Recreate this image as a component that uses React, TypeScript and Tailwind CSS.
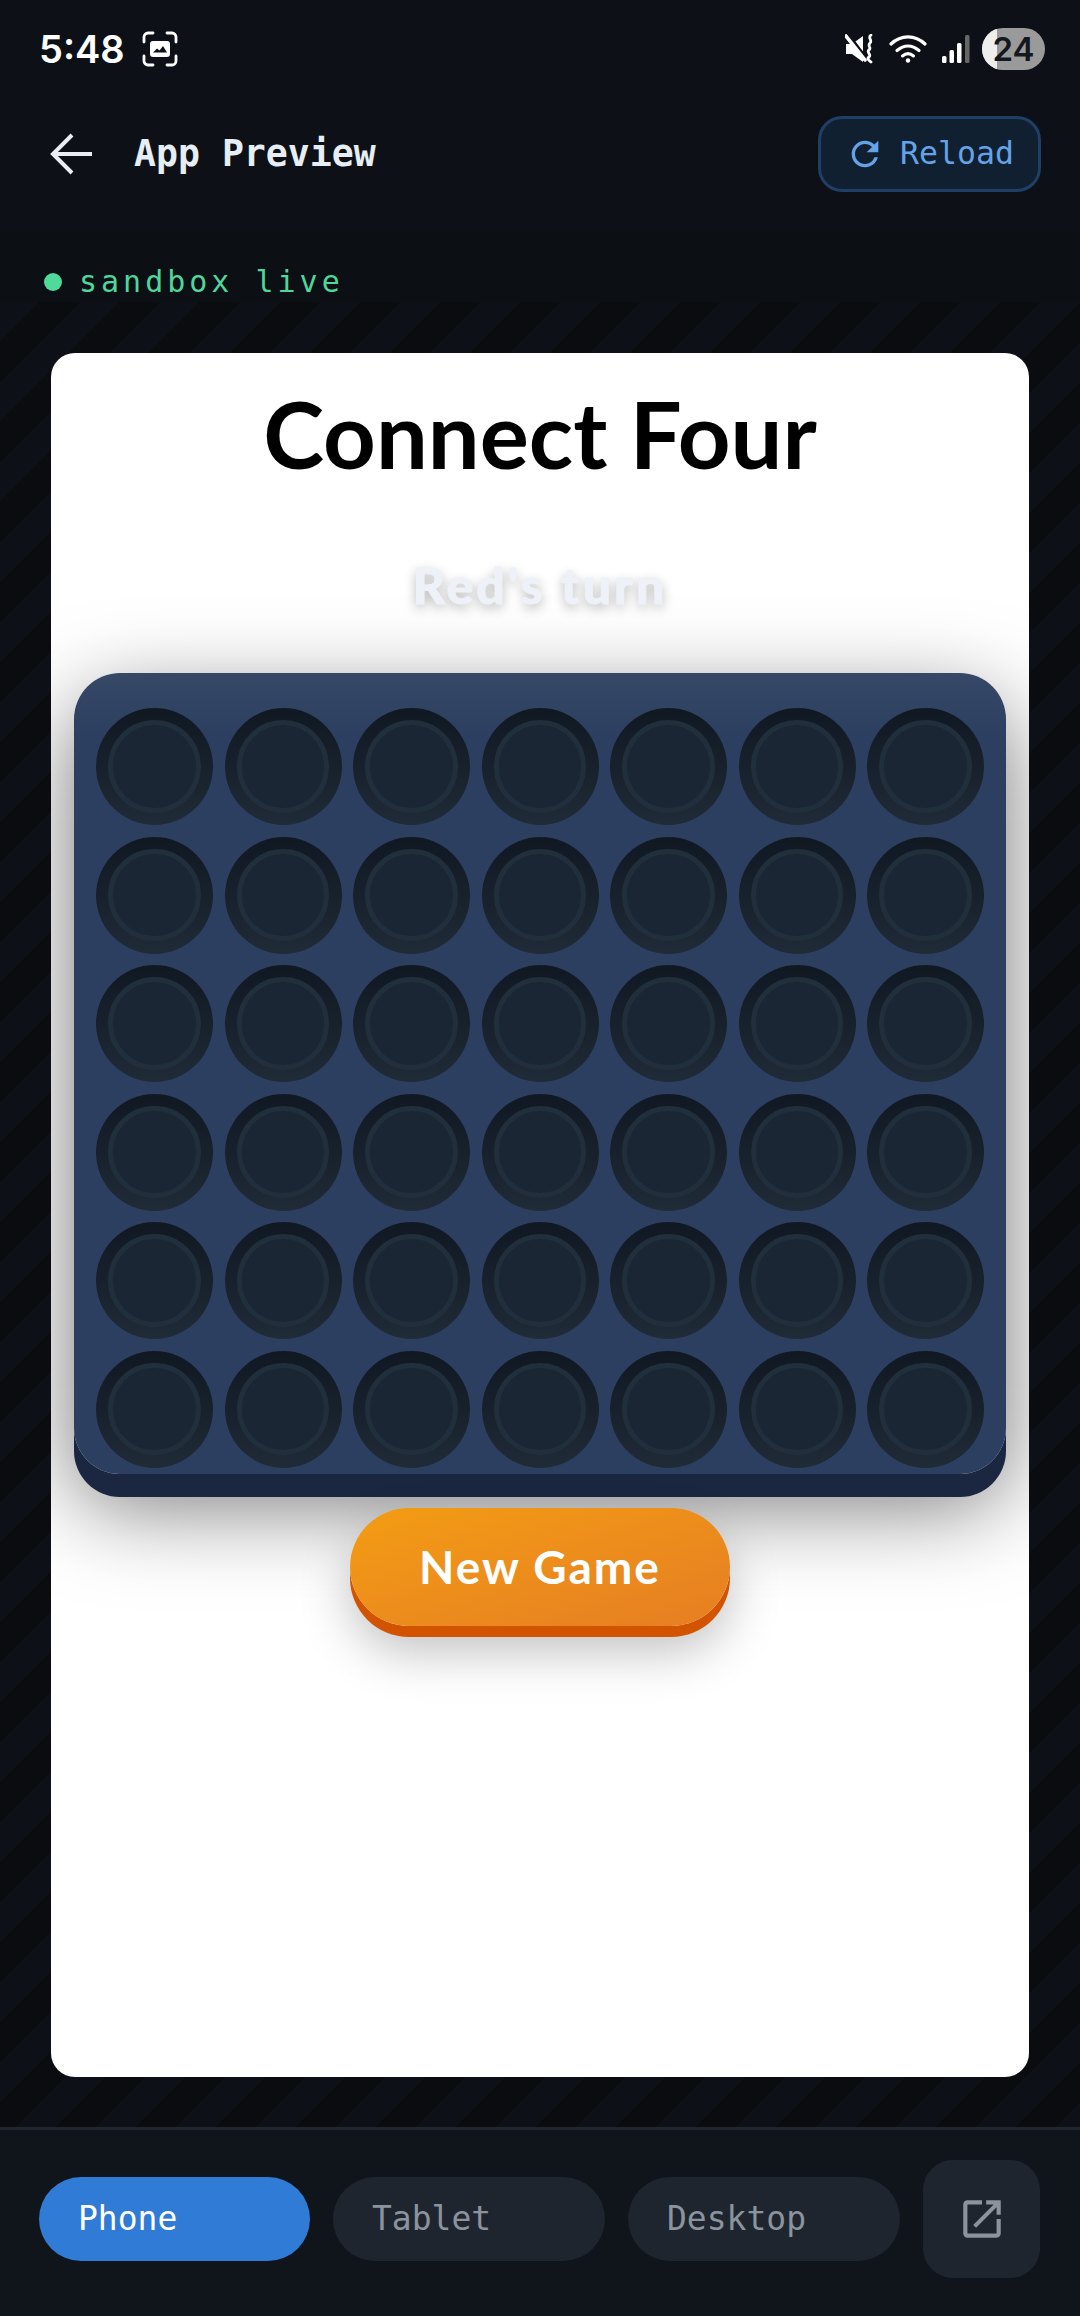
import { MdOpenInNew, MdRefresh } from "react-icons/md";

const rows = [0, 1, 2, 3, 4, 5];
const cols = [0, 1, 2, 3, 4, 5, 6];
const mono = "font-['DejaVu_Sans_Mono',monospace]";

function StatusBar() {
  return (
    <div className="flex h-[98px] items-center justify-between pl-[39px] pr-[35px]">
      <div className="flex items-center gap-[17px]">
        <span className="font-['Inter',sans-serif] text-[38px] font-semibold leading-none text-white">5:48</span>
        <svg width="36" height="36" viewBox="0 0 36 36" fill="none">
          <path d="M2 11V6a4 4 0 0 1 4-4h5M25 2h5a4 4 0 0 1 4 4v5M34 25v5a4 4 0 0 1-4 4h-5M11 34H6a4 4 0 0 1-4-4v-5" stroke="#fff" strokeWidth="2.8" strokeLinecap="round" />
          <rect x="8" y="10" width="20" height="16" rx="3" fill="#fff" />
          <path d="M11 21.500l4-4 2.500 2 3.500-4.500 4 6.500z" fill="#0d1117" />
        </svg>
      </div>
      <div className="flex items-center">
        <svg width="30" height="30" viewBox="0 0 30 30" fill="#fff">
          <path d="M1 10h6l11-8v26L7 20H1z" />
          <path d="M3 1l19 25" stroke="#0d1117" strokeWidth="4" />
          <path d="M1 2l19 24" stroke="#fff" strokeWidth="3.600" strokeLinecap="round" />
          <path d="M26 1c-4 3 2 5-1 8s2 5-1 7 3 5 0 7 1 4 2 5" stroke="#fff" strokeWidth="2.800" fill="none" strokeLinecap="round" />
        </svg>
        <svg className="ml-[14px]" width="38" height="28" viewBox="0 0 38 28" fill="none" stroke="#fff" strokeLinecap="round">
          <path d="M2 9c10-9.500 24-9.500 34 0" strokeWidth="3.200" />
          <path d="M8 15.500c7-6 15-6 22 0" strokeWidth="3.200" />
          <path d="M13.500 21c3.500-3 7.500-3 11 0" strokeWidth="3" />
          <circle cx="19" cy="25.500" r="2.200" fill="#fff" stroke="none" />
        </svg>
        <svg className="ml-[15px]" width="28" height="30" viewBox="0 0 28 30">
          <rect x="0" y="22" width="4.500" height="7" rx="1.500" fill="#fff" />
          <rect x="7.500" y="16" width="4.500" height="13" rx="1.500" fill="#fff" />
          <rect x="15" y="9" width="4.500" height="20" rx="1.500" fill="#fff" />
          <rect x="23" y="1" width="4.500" height="28" rx="1.500" fill="#666" />
        </svg>
        <div className="relative ml-[12px] h-[42px] w-[63px] overflow-hidden rounded-full bg-[#9a9a9a]">
          <div className="h-full w-[15px] bg-[#eeeeee]" />
          <span className="absolute inset-0 flex items-center justify-center font-['Inter',sans-serif] text-[33px] font-semibold leading-none text-[#14171e]">24</span>
        </div>
      </div>
    </div>
  );
}

function Header() {
  return (
    <div className="flex h-[135px] items-start justify-between pl-[50px] pr-[39px] pt-[18px]">
      <div className="flex h-[76px] items-center">
        <svg width="42" height="42" viewBox="0 0 42 42" fill="none" stroke="#e9edf4" strokeWidth="4">
          <path d="M42 21H3M22 2L3 21l19 19" />
        </svg>
        <span className={`ml-[42px] ${mono} text-[36.500px] font-bold leading-none text-[#e6edf3]`}>App Preview</span>
      </div>
      <button className="flex h-[76px] w-[223px] items-center justify-center gap-[15px] rounded-[24px] border-[3px] border-[#1f3f66] bg-[#112030]">
        <MdRefresh size={40} className="text-[#64a3e8]" />
        <span className={`${mono} text-[31.500px] leading-none text-[#64a3e8]`}>Reload</span>
      </button>
    </div>
  );
}

function Hole() {
  return (
    <div className="flex aspect-square items-center justify-center rounded-full bg-gradient-to-b from-[#101822] to-[#1f2b37]">
      <div className="h-[79%] w-[79%] rounded-full border-[5px] border-[#212e3b] bg-[#1a2634]" />
    </div>
  );
}

function Board() {
  return (
    <div className="mx-[23px] mt-[60px] rounded-[46px] bg-gradient-to-b from-[#364866] from-0% to-[#2d3f60] to-8% pb-[6px] pl-[22px] pr-[22px] pt-[35px] shadow-[0_23px_0_#1b2740,0_30px_90px_rgba(0,0,0,0.55)]">
      <div className="grid gap-y-[11.500px]">
        {rows.map((r) => (
          <div key={r} className="grid grid-cols-7 gap-x-[11.500px]">
            {cols.map((c) => (
              <Hole key={c} />
            ))}
          </div>
        ))}
      </div>
    </div>
  );
}

export default function App() {
  return (
    <div className="flex h-[2316px] w-[1080px] flex-col overflow-hidden bg-[#0d1117]">
      <StatusBar />
      <Header />
      <div className="flex h-[69px] items-center gap-[17px] bg-[#0c0f13] pl-[44px] pt-[28px]">
        <span className="h-[18px] w-[18px] rounded-full bg-[#4fd99b]" />
        <span className={`${mono} text-[30px] leading-none tracking-[4px] text-[#4fd69c]`}>sandbox live</span>
      </div>
      <div className="flex-1 bg-[repeating-linear-gradient(135deg,#0d1017_0,#0d1017_28.280px,#0a0c10_28.280px,#0a0c10_56.570px)] px-[51px] pt-[51px]">
        <div className="h-[1724px] overflow-hidden rounded-[24px] bg-white">
          <h1 className="pt-[26px] text-center font-['Lato',sans-serif] text-[92px] font-bold leading-[110px] text-black">Connect Four</h1>
          <p className="mt-[68px] text-center font-['Lato',sans-serif] text-[50px] font-black leading-[56px] tracking-[3px] text-[#eef1f8] [-webkit-text-stroke:1px_#eef1f8] [text-shadow:0_4px_12px_rgba(0,0,0,0.3)]">Red's turn</p>
          <Board />
          <div className="mt-[34px] flex justify-center">
            <button className="h-[118px] w-[380px] rounded-full bg-gradient-to-br from-[#f39c12] to-[#e67e22] font-['Lato',sans-serif] text-[46px] font-bold tracking-[2px] text-white shadow-[0_11px_0_#d35400,0_25px_50px_rgba(0,0,0,0.25)]">
              New Game
            </button>
          </div>
        </div>
      </div>
      <div className="flex h-[189px] items-center gap-[23px] border-t-[3px] border-[#1f2630] bg-[#10151c] pb-[9px] pl-[39px]">
        <div className={`flex h-[84px] w-[271px] items-center rounded-full bg-[#2f7bd6] pl-[39px] ${mono} text-[33px] text-white`}>Phone</div>
        <div className={`flex h-[84px] w-[272px] items-center rounded-full bg-[#1f252e] pl-[39px] ${mono} text-[33px] text-[#8b949e]`}>Tablet</div>
        <div className={`flex h-[84px] w-[272px] items-center rounded-full bg-[#1f252e] pl-[39px] ${mono} text-[33px] text-[#8b949e]`}>Desktop</div>
        <div className="flex h-[118px] w-[117px] items-center justify-center rounded-[30px] bg-[#1f252e]">
          <MdOpenInNew size={50} className="text-[#8b949e]" />
        </div>
      </div>
    </div>
  );
}
